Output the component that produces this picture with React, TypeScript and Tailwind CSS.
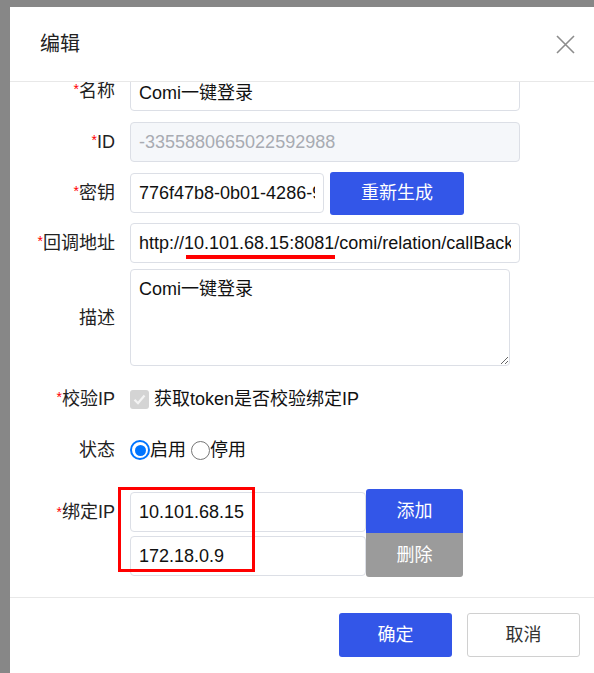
import type { ReactNode } from 'react';

const BLUE = 'bg-[#3356e8]';

function Label({ required, children, className = '' }: { required?: boolean; children: ReactNode; className?: string }) {
  return (
    <div className={`w-[105px] shrink-0 text-right text-[18px] leading-[18px] text-[#222] ${className}`}>
      {required && <span className="align-top text-[14px] leading-[14px] text-[#f00]">*</span>}
      {children}
    </div>
  );
}

function TextInput({ value, className = '', disabled }: { value: string; className?: string; disabled?: boolean }) {
  return (
    <input
      readOnly
      defaultValue={value}
      className={`h-[40px] rounded-[4px] border border-[#dcdfe6] px-[8px] text-[18px] outline-none ${
        disabled ? 'bg-[#f5f7fa] text-[#a8abb2]' : 'bg-white text-[#111]'
      } ${className}`}
    />
  );
}

function CloseIcon() {
  return (
    <svg width="19" height="19" viewBox="0 0 19 19" fill="none">
      <path d="M1 1L18 18M18 1L1 18" stroke="#8c8c8c" strokeWidth="1.6" />
    </svg>
  );
}

export default function App() {
  return (
    <div className="h-[673px] w-[594px] overflow-hidden bg-[#878787] pl-[10px] pt-[7px] font-['Liberation_Sans','Noto_Sans_CJK_SC',sans-serif]">
      <div className="flex h-full flex-col bg-white">
        {/* 헤더 */}
        <div className="flex h-[75px] shrink-0 items-center justify-between border-b border-[#e8e8e8] pl-[30px] pr-[19px]">
          <span className="text-[20px] text-[#222]">编辑</span>
          <CloseIcon />
        </div>

        {/* 본문 (스크롤된 상태) */}
        <div className="h-[515px] shrink-0 overflow-hidden">
          <div className="-mt-[11px] flex flex-col">
            <div className="flex items-center gap-[15px]">
              <Label required>名称</Label>
              <TextInput value="Comi一键登录" className="w-[390px]" />
            </div>

            <div className="mt-[11px] flex items-center gap-[15px]">
              <Label required>ID</Label>
              <TextInput value="-3355880665022592988" disabled className="w-[390px]" />
            </div>

            <div className="mt-[9px] flex h-[44px] items-center gap-[15px]">
              <Label required>密钥</Label>
              <div className="flex items-center gap-[6px]">
                <TextInput value="776f47b8-0b01-4286-9a3c-5e7d21f0b6aa" className="w-[194px]" />
                <button className={`h-[43px] w-[134px] rounded-[3px] ${BLUE} text-[18px] text-white`}>重新生成</button>
              </div>
            </div>

            <div className="mt-[8px] flex items-center gap-[15px]">
              <Label required>回调地址</Label>
              <div className="relative">
                <TextInput value="http://10.101.68.15:8081/comi/relation/callBack" className="w-[390px]" />
                <div className="absolute left-[56px] top-[32px] h-[4px] w-[149px] bg-[#f00]" />
              </div>
            </div>

            <div className="mt-[6px] flex items-center gap-[15px]">
              <Label>描述</Label>
              <textarea
                readOnly
                defaultValue="Comi一键登录"
                className="h-[97px] w-[380px] rounded-[4px] border border-[#dcdfe6] px-[8px] pt-[6px] text-[18px] leading-[27px] text-[#111] outline-none"
              />
            </div>

            <div className="mt-[18px] flex h-[30px] items-center gap-[15px]">
              <Label required>校验IP</Label>
              <div className="flex items-center gap-[5px]">
                <div className="flex h-[19px] w-[19px] items-center justify-center rounded-[3px] bg-[#d4d4d4]">
                  <svg width="13" height="13" viewBox="0 0 13 13" fill="none">
                    <path d="M1.5 6.8L5 10.2L11.5 2.5" stroke="#f4f4f4" strokeWidth="2.2" />
                  </svg>
                </div>
                <span className="text-[18px] text-[#111]">获取token是否校验绑定IP</span>
              </div>
            </div>

            <div className="mt-[21px] flex h-[30px] items-center gap-[15px]">
              <Label>状态</Label>
              <div className="flex items-center text-[18px] text-[#111]">
                <div className="flex h-[20px] w-[20px] items-center justify-center rounded-full border-[2px] border-[#0075ff]">
                  <div className="h-[11px] w-[11px] rounded-full bg-[#0075ff]" />
                </div>
                <span>启用</span>
                <div className="ml-[5px] h-[19px] w-[19px] rounded-full border-[1.5px] border-[#767676]" />
                <span>停用</span>
              </div>
            </div>

            <div className="mt-[24px] flex items-start gap-[15px]">
              <Label required className="mt-[3px] flex h-[40px] items-center justify-end">
                绑定IP
              </Label>
              <div className="relative flex">
                <div className="flex flex-col gap-[4px] pt-[3px]">
                  <TextInput value="10.101.68.15" className="w-[236px]" />
                  <TextInput value="172.18.0.9" className="w-[236px]" />
                </div>
                <div className="flex flex-col">
                  <button className={`h-[44px] w-[97px] rounded-t-[3px] ${BLUE} text-[18px] text-white`}>添加</button>
                  <button className="h-[44px] w-[97px] rounded-b-[3px] bg-[#9b9b9b] text-[18px] text-white">删除</button>
                </div>
                <div className="absolute -left-[12px] -top-[2px] h-[85px] w-[137px] border-[3px] border-[#f00]" />
              </div>
            </div>
          </div>
        </div>

        {/* 푸터 */}
        <div className="flex flex-1 justify-end gap-[15px] border-t border-[#e8e8e8] pr-[14px] pt-[15px]">
          <button className={`h-[44px] w-[113px] rounded-[3px] ${BLUE} text-[18px] text-white`}>确定</button>
          <button className="h-[44px] w-[113px] rounded-[3px] border border-[#d0d0d0] bg-white text-[18px] text-[#333]">取消</button>
        </div>
      </div>
    </div>
  );
}
